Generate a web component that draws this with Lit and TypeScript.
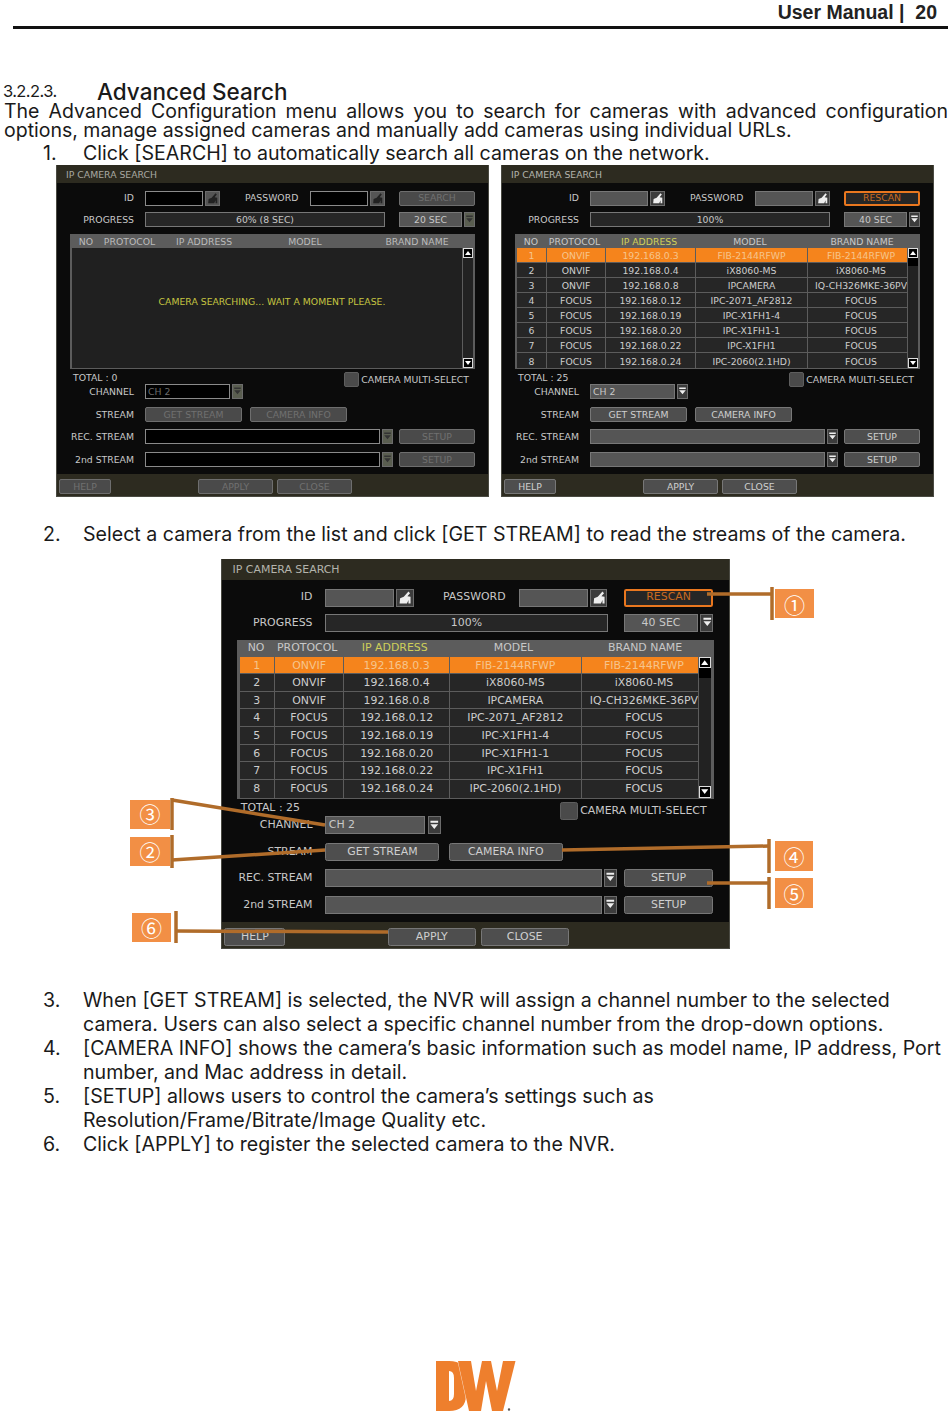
import { LitElement, html, css, svg, nothing } from "lit";
import { customElement, property } from "lit/decorators.js";

const ROWS = [
  ["1", "ONVIF", "192.168.0.3", "FIB-2144RFWP", "FIB-2144RFWP"],
  ["2", "ONVIF", "192.168.0.4", "iX8060-MS", "iX8060-MS"],
  ["3", "ONVIF", "192.168.0.8", "IPCAMERA", "IQ-CH326MKE-36PV"],
  ["4", "FOCUS", "192.168.0.12", "IPC-2071_AF2812", "FOCUS"],
  ["5", "FOCUS", "192.168.0.19", "IPC-X1FH1-4", "FOCUS"],
  ["6", "FOCUS", "192.168.0.20", "IPC-X1FH1-1", "FOCUS"],
  ["7", "FOCUS", "192.168.0.22", "IPC-X1FH1", "FOCUS"],
  ["8", "FOCUS", "192.168.0.24", "IPC-2060(2.1HD)", "FOCUS"],
];

const hand = html`<span class="ico"><svg viewBox="0 0 15 15" width="15" height="15"><path d="M2.5 13 L3 8 L6.5 6.5 L11 1.5 L12.5 3 L10 6 L13 6.5 L13 13 L11 13 L11 9.5 L9.5 13 Z" fill="currentColor"/></svg></span>`;
const drop = html`<span class="ico dd"><svg viewBox="0 0 11 15" width="9" height="13"><path d="M1.5 2.5 H9.5 V4.5 H1.5 Z M1.5 6 H9.5 L5.5 11 Z" fill="currentColor"/></svg></span>`;

@customElement("camera-panel")
class CameraPanel extends LitElement {
  @property({ type: Boolean, reflect: true }) searching = false;

  static styles = css`
    :host { display: block; width: 433px; height: 332px; color: #c8c8c8; font: 9.3px/1 "DejaVu Sans", sans-serif; }
    :host(.big) { zoom: 1.1755; }
    .panel { height: 100%; box-sizing: border-box; display: flex; flex-direction: column; background: #0b0b0b; border: solid #4a4a42; border-width: 0 1px 1px; overflow: hidden; }
    .title { height: 18px; flex: none; box-sizing: border-box; padding: 1px 0 0 9px; display: flex; align-items: center; background: #2d2b20; color: #b4b4ac; }
    .body { flex: 1; padding: 7.5px 13px 0; }
    .row { display: flex; align-items: center; height: 15px; }
    .mt6 { margin-top: 6.5px; }
    .mt7 { margin-top: 7px; }
    .mt8 { margin-top: 8px; }
    .lab { width: 64px; margin-right: 11px; flex: none; text-align: right; }
    .field { box-sizing: border-box; height: 15px; display: flex; align-items: center; justify-content: center; border: 1px solid #777; background: #555; flex: none; }
    .f58 { width: 58px; }
    .f240 { width: 240px; background: #262626; }
    .f85 { width: 85px; justify-content: flex-start; padding-left: 2px; }
    .f235 { width: 235px; }
    .f63 { width: 63px; }
    .ico { box-sizing: border-box; width: 15px; height: 15px; margin-left: 2px; flex: none; display: flex; align-items: center; justify-content: center; background: #3c3c3c; border: 1px solid #6c6c6c; color: #eee; overflow: hidden; }
    .ico.dd { width: 11px; margin-left: 2px; }
    .pw { width: 65px; margin: 0 0 0 25px; text-align: left; flex: none; }
    .btn { box-sizing: border-box; height: 15px; flex: none; display: flex; align-items: center; justify-content: center; background: #4e4e4e; border: 1px solid #777; border-radius: 2px; color: #cfcfcf; }
    .w76 { width: 76px; }
    .w97 { width: 97px; }
    .right { margin-left: 14px; }
    .gap8 { margin-left: 8px; }
    .gap6 { margin-left: 6px; }
    .gap14 { margin-left: 14px; }
    .rescan { border: 2px solid #e9771f; background: #262626; color: #c96a20; }
    .table { margin-top: 7px; height: 135px; box-sizing: border-box; background: #5c5c5c; padding: 0 2px 1px; display: flex; flex-direction: column; }
    .grid { display: grid; grid-template-columns: 30px 59px 90px 112px 99px; }
    .head { height: 14px; flex: none; align-items: center; text-align: center; padding-top: 1px; box-sizing: border-box; grid-template-columns: 28px 59px 90px 112px 112px; }
    .hl { color: #cfcf5a; }
    .list { flex: 1; min-height: 0; display: flex; background: #202020; }
    .rows { flex: 1; min-width: 0; display: flex; flex-direction: column; }
    .tr { height: 15px; box-sizing: border-box; border-bottom: 1px solid #5c5c5c; flex: none; }
    .tr:last-child { border-bottom: 0; }
    .td { display: flex; align-items: center; justify-content: safe center; white-space: nowrap; overflow: hidden; border-right: 1px solid #5c5c5c; background: #262626; color: #cdcdcd; padding-top: 2px; box-sizing: border-box; }
    .td:last-child { border-right: 0; padding-left: 7px; }
    .sel .td { background: #f5841c; color: #f6c48c; }
    .msg { flex: 1; display: flex; align-items: center; justify-content: center; color: #c4c440; padding: 0 0 12px 10px; }
    .bar { width: 11px; flex: none; display: flex; flex-direction: column; justify-content: space-between; background: #222; position: relative; border-left: 1px solid #5c5c5c; box-sizing: border-box; }
    .bar .arrow { width: 10px; height: 10px; box-sizing: border-box; background: #000; border: 1px solid #ddd; color: #fff; display: block; }
    .bar .arrow svg { display: block; }
    .thumb { height: 8px; background: #000; margin-bottom: auto; }
    .arrow.down { margin-top: auto; }
    .total { height: 14px; margin-top: 1px; display: flex; padding-left: 3px; position: relative; }
    .total .tt { padding-top: 3px; }
    .multi { margin-left: auto; margin-top: 2px; margin-right: 6px; display: flex; align-items: center; height: 15px; }
    .check { width: 15px; height: 15px; box-sizing: border-box; background: #4a4a4a; border: 1px solid #5e5e5e; border-radius: 2px; margin-right: 2px; }
    .foot { height: 22px; flex: none; box-sizing: border-box; padding: 5px 0 0 2px; background: #2d2b20; display: flex; }
    .foot .btn { height: 15px; }
    .help { width: 52px; }
    .apply { width: 75px; margin-left: 87px; }
    .close { width: 75px; margin-left: 4px; }

    :host([searching]) .title { color: #a8a8a0; }
    :host([searching]) .input { background: #000; border-color: #8a8a8a; }
    :host([searching]) .btn { color: #707070; border-color: #6e6e6e; background: #4a4a4a; }
    :host([searching]) .ico { color: #222; background: #555; }
    :host([searching]) .dd { color: #333; background: #5a5e50; }
    :host([searching]) .f85 { color: #6a6a6a; }
    :host([searching]) .head span { color: #bbb; }
  `;

  private arrow(down: boolean) {
    return html`<span class="arrow ${down ? "down" : ""}"><svg viewBox="0 0 8 8" width="8" height="8"><path d="${down ? "M1 2 H7 L4 6 Z" : "M1 6 H7 L4 2 Z"}" fill="currentColor"/></svg></span>`;
  }

  render() {
    const s = this.searching;
    return html`<div class="panel">
      <div class="title">IP CAMERA SEARCH</div>
      <div class="body">
        <div class="row">
          <span class="lab">ID</span><span class="field f58 input"></span>${hand}
          <span class="pw">PASSWORD</span><span class="field f58 input"></span>${hand}
          <span class="btn w76 gap14 ${s ? "" : "rescan"}">${s ? "SEARCH" : "RESCAN"}</span>
        </div>
        <div class="row mt6">
          <span class="lab">PROGRESS</span><span class="field f240">${s ? "60% (8 SEC)" : "100%"}</span>
          <span class="field f63 right">${s ? "20 SEC" : "40 SEC"}</span>${drop}
        </div>
        <div class="table">
          <div class="grid head">
            <span>NO</span><span>PROTOCOL</span><span class="${s ? "" : "hl"}">IP ADDRESS</span><span>MODEL</span><span>BRAND NAME</span>
          </div>
          <div class="list">
            <div class="rows">
              ${s
                ? html`<div class="msg">CAMERA SEARCHING... WAIT A MOMENT PLEASE.</div>`
                : ROWS.map(
                    (r, i) => html`<div class="grid tr ${i === 0 ? "sel" : ""}">${r.map((c) => html`<span class="td">${c}</span>`)}</div>`
                  )}
            </div>
            <div class="bar">
              ${this.arrow(false)}${s ? nothing : html`<div class="thumb"></div>`}${this.arrow(true)}
            </div>
          </div>
        </div>
        <div class="total">
          <span class="tt">TOTAL : ${s ? "0" : "25"}</span>
          <span class="multi"><span class="check"></span>CAMERA MULTI-SELECT</span>
        </div>
        <div class="row">
          <span class="lab">CHANNEL</span><span class="field f85 input">CH 2</span>${drop}
        </div>
        <div class="row mt8">
          <span class="lab">STREAM</span><span class="btn w97">GET STREAM</span>
          <span class="btn w97 gap8">CAMERA INFO</span>
        </div>
        <div class="row mt7">
          <span class="lab">REC. STREAM</span><span class="field f235 input"></span>${drop}
          <span class="btn w76 gap6">SETUP</span>
        </div>
        <div class="row mt8">
          <span class="lab">2nd STREAM</span><span class="field f235 input"></span>${drop}
          <span class="btn w76 gap6">SETUP</span>
        </div>
      </div>
      <div class="foot">
        <span class="btn help">HELP</span>
        <span class="btn apply">APPLY</span>
        <span class="btn close">CLOSE</span>
      </div>
    </div>`;
  }
}

const CALLOUTS: { x: number; y: number; w: number; h: number; g: string; d: number }[] = [
  { x: 775, y: 589, w: 39, h: 29, g: "①", d: 0 },
  { x: 130, y: 837, w: 40, h: 29, g: "②", d: -1 },
  { x: 130, y: 800, w: 40, h: 29, g: "③", d: -2 },
  { x: 775, y: 841, w: 38, h: 30, g: "④", d: 0 },
  { x: 775, y: 878, w: 38, h: 30, g: "⑤", d: 0 },
  { x: 132, y: 913, w: 39, h: 29, g: "⑥", d: -1 },
];
const LINES = [
  [707, 594, 772, 594],
  [772, 587, 772, 620],
  [172, 860, 325, 850],
  [172, 835, 172, 868],
  [172, 800, 325, 825],
  [172, 798, 172, 830],
  [562, 850, 769, 846],
  [769, 839, 769, 873],
  [707, 883, 769, 883],
  [769, 877, 769, 909],
  [176, 931, 388, 932],
  [176, 911, 176, 943],
];

@customElement("app-root")
class AppRoot extends LitElement {
  static styles = css`
    :host { display: flex; flex-direction: column; min-height: 1417px; background: #fff; color: #1a1a1a; font-family: Inter, "Open Sans", sans-serif; }
    .top { height: 29px; box-sizing: border-box; margin: 0 2px 0 13px; border-bottom: 3px solid #111; display: flex; justify-content: flex-end; align-items: center; padding-right: 11px; font: 700 19.5px/1 "Liberation Sans", sans-serif; color: #222; }
    .h { margin-top: 51px; height: 22px; display: flex; align-items: center; padding-left: 3px; }
    .num { width: 94px; font-size: 16.5px; letter-spacing: -0.6px; }
    .tit { font-size: 22.5px; font-weight: 500; }
    p { margin: 0; padding: 0 2px 0 4px; font-size: 19.5px; line-height: 19px; text-align: justify; font-weight: 400; }
    .item { display: grid; grid-template-columns: 40px 1fr; padding: 0 2px 0 43px; font-size: 19.6px; line-height: 24px; }
    .first { margin-top: 2px; line-height: 23px; }
    .shots { display: flex; gap: 12px; padding-left: 56px; }
    .second { margin-top: 25px; }
    .fig { position: relative; margin: 13px 0 39px 221px; width: 509px; }
    .over { position: absolute; left: -221px; top: 0; overflow: visible; pointer-events: none; }
    .over line { stroke: #b06c2a; stroke-width: 3.5; }
    .over rect { fill: #f28f45; }
    .over text { fill: #fff; font: 21px "Noto Sans CJK JP", sans-serif; text-anchor: middle; dominant-baseline: central; }
    .logo { margin: auto auto 6px 436px; display: block; }
  `;

  render() {
    return html`
      <div class="top">User Manual |&nbsp; 20</div>
      <div class="h"><span class="num">3.2.2.3.</span><span class="tit">Advanced Search</span></div>
      <p>The Advanced Configuration menu allows you to search for cameras with advanced configuration options, manage assigned cameras and manually add cameras using individual URLs.</p>
      <div class="item first"><span>1.</span><span>Click [SEARCH] to automatically search all cameras on the network.</span></div>
      <div class="shots">
        <camera-panel searching></camera-panel>
        <camera-panel></camera-panel>
      </div>
      <div class="item second"><span>2.</span><span>Select a camera from the list and click [GET STREAM] to read the streams of the camera.</span></div>
      <div class="fig">
        <camera-panel class="big"></camera-panel>
        <svg class="over" width="950" height="390" viewBox="0 559 950 390">
          ${CALLOUTS.map(
            (c) => svg`<rect x=${c.x} y=${c.y} width=${c.w} height=${c.h}></rect><text x=${c.x + c.w / 2} y=${c.y + c.h / 2 + c.d}>${c.g}</text>`
          )}
          ${LINES.map((l) => svg`<line x1=${l[0]} y1=${l[1]} x2=${l[2]} y2=${l[3]}></line>`)}
        </svg>
      </div>
      <div class="item"><span>3.</span><span>When [GET STREAM] is selected, the NVR will assign a channel number to the selected camera. Users can also select a specific channel number from the drop-down options.</span></div>
      <div class="item"><span>4.</span><span>[CAMERA INFO] shows the camera’s basic information such as model name, IP address, Port number, and Mac address in detail.</span></div>
      <div class="item"><span>5.</span><span>[SETUP] allows users to control the camera’s settings such as<br />Resolution/Frame/Bitrate/Image Quality etc.</span></div>
      <div class="item"><span>6.</span><span>Click [APPLY] to register the selected camera to the NVR.</span></div>
      <svg class="logo" width="80" height="50" viewBox="0 0 80 50" role="img" aria-label="DW">
        <path fill-rule="evenodd" fill="#ee7f2d" d="M0 0 H13 Q30 0 30 16 V34 Q30 50 13 50 H0 Z M13 10 V40 Q18 40 18 33 V17 Q18 10 13 10 Z"></path>
        <path fill="#ee7f2d" stroke="#fff" stroke-width="0.7" paint-order="stroke" d="M22 0 H35 L40 30 L46 0 H55 L61 30 L67 0 H79.5 L67 50 H56 L50 20 L45 50 H33 Z"></path>
        <circle cx="73" cy="48.5" r="1.2" fill="#555"></circle>
      </svg>
    `;
  }
}
